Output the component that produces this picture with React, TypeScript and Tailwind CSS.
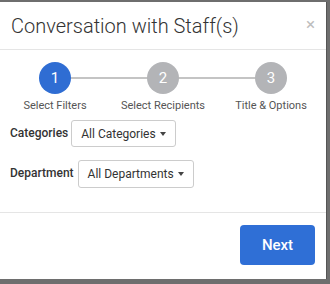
import React from "react";

function Step({ n, label, active }: { n: number; label: string; active?: boolean }) {
  return (
    <div className="flex flex-col items-center w-[110px] relative z-10">
      <div
        className={
          "w-[32px] h-[32px] rounded-full flex items-center justify-center text-white text-[15px] " +
          (active ? "bg-[#2f6dd3]" : "bg-[#b3b4b7]")
        }
      >
        {n}
      </div>
      <div className="mt-[5px] text-[11px] leading-[13px] text-[#555] whitespace-nowrap">{label}</div>
    </div>
  );
}

function Caret() {
  return <span className="inline-block ml-[4px] w-0 h-0 border-l-[3.5px] border-r-[3.5px] border-t-[4px] border-l-transparent border-r-transparent border-t-[#444] align-middle" />;
}

export default function App() {
  return (
    <div className="w-[330px] h-[284px] bg-[#6e6e6e] pt-[2px] overflow-hidden" style={{ fontFamily: "Roboto, 'Liberation Sans', sans-serif" }}>
      <div className="w-[327px] h-[277px] bg-white border-r border-[#555] flex flex-col">
        <div className="h-[48px] border-b border-[#e5e5e5] flex items-center justify-between pl-[11px] pr-[11px]">
          <div className="text-[20px] font-light text-[#333]">Conversation with Staff(s)</div>
          <div className="text-[17px] text-[#bdbdbd] leading-none -mt-[3px]">×</div>
        </div>
        <div className="h-[163px] border-b border-[#e5e5e5] relative">
          <div className="absolute left-[56px] right-[56px] top-[27px] h-[2px] bg-[#c4c4c4]" />
          <div className="flex justify-between px-[1px] pt-[12px]">
            <Step n={1} label="Select Filters" active />
            <Step n={2} label="Select Recipients" />
            <Step n={3} label="Title & Options" />
          </div>
          <div className="flex items-center mt-[8px] pl-[10px]">
            <span className="text-[12px] font-medium text-[#333] mr-[3px] -mt-[2px]">Categories</span>
            <div className="h-[27px] px-[9px] border border-[#ccc] rounded-[3px] flex items-center text-[12px] text-[#333]">
              All Categories<Caret />
            </div>
          </div>
          <div className="flex items-center mt-[13px] pl-[10px]">
            <span className="text-[12px] font-medium text-[#333] mr-[4px] -mt-[2px]">Department</span>
            <div className="h-[28px] px-[9px] border border-[#ccc] rounded-[3px] flex items-center text-[12px] text-[#333]">
              All Departments<Caret />
            </div>
          </div>
        </div>
        <div className="flex justify-end pr-[11px] pt-[12px]">
          <div className="w-[75px] h-[40px] bg-[#2f6fd6] rounded-[4px] text-white text-[15px] font-medium flex items-center justify-center">Next</div>
        </div>
      </div>
    </div>
  );
}
